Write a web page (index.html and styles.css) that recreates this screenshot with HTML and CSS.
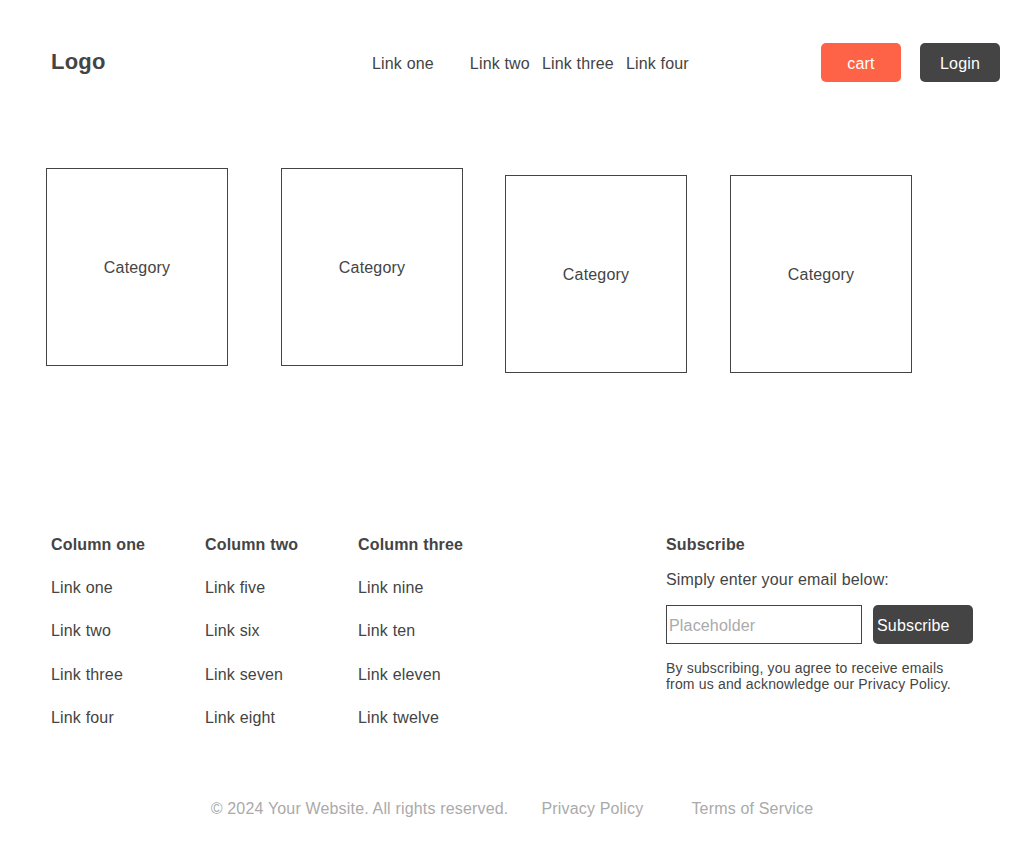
FILE: index.html
```html
<!DOCTYPE html>
<html lang="en">
<head>
<meta charset="utf-8">
<title>Shop</title>
<link rel="stylesheet" href="styles.css">
</head>
<body>
<header class="header">
  <div class="logo">Logo</div>
  <nav class="nav">
    <a class="nav-link nav-link-first" href="#">Link one</a>
    <a class="nav-link" href="#">Link two</a>
    <a class="nav-link" href="#">Link three</a>
    <a class="nav-link" href="#">Link four</a>
  </nav>
  <div class="actions">
    <button class="btn btn-cart">cart</button>
    <button class="btn btn-login">Login</button>
  </div>
</header>

<section class="categories">
  <div class="category cat-1">Category</div>
  <div class="category cat-2">Category</div>
  <div class="category cat-3">Category</div>
  <div class="category cat-4">Category</div>
</section>

<footer class="footer">
  <div class="footer-grid">
    <div class="col">
      <h4 class="col-title">Column one</h4>
      <ul class="col-links">
        <li><a href="#">Link one</a></li>
        <li><a href="#">Link two</a></li>
        <li><a href="#">Link three</a></li>
        <li><a href="#">Link four</a></li>
      </ul>
    </div>
    <div class="col">
      <h4 class="col-title">Column two</h4>
      <ul class="col-links">
        <li><a href="#">Link five</a></li>
        <li><a href="#">Link six</a></li>
        <li><a href="#">Link seven</a></li>
        <li><a href="#">Link eight</a></li>
      </ul>
    </div>
    <div class="col">
      <h4 class="col-title">Column three</h4>
      <ul class="col-links">
        <li><a href="#">Link nine</a></li>
        <li><a href="#">Link ten</a></li>
        <li><a href="#">Link eleven</a></li>
        <li><a href="#">Link twelve</a></li>
      </ul>
    </div>
    <div class="col subscribe">
      <h4 class="col-title">Subscribe</h4>
      <p class="sub-text">Simply enter your email below:</p>
      <form class="sub-form">
        <input class="sub-input" type="email" placeholder="Placeholder">
        <button class="sub-btn" type="button">Subscribe</button>
      </form>
      <p class="sub-note">By subscribing, you agree to receive emails from us and acknowledge our Privacy Policy.</p>
    </div>
  </div>
  <div class="bottom">
    <span class="copy">© 2024 Your Website. All rights reserved.</span>
    <a class="bottom-link bottom-link-1" href="#">Privacy Policy</a>
    <a class="bottom-link bottom-link-2" href="#">Terms of Service</a>
  </div>
</footer>
</body>
</html>
```
FILE: styles.css
```css
* { box-sizing: border-box; }

body {
  margin: 0;
  background: #fff;
  color: #444;
  font-family: "Liberation Sans", Arial, sans-serif;
  font-size: 16px;
  line-height: 18px;
  letter-spacing: 0.17px;
}

a { color: inherit; text-decoration: none; }

.header {
  display: flex;
  align-items: center;
  padding: 43px 24px 0 51px;
  height: 82px;
}

.logo {
  font-size: 22px;
  font-weight: bold;
  line-height: 24px;
  width: 54px;
  margin-top: -1px;
  letter-spacing: 0.2px;
}

.nav {
  display: flex;
  gap: 12px;
  margin-left: 267px;
  padding-top: 2px;
}

.nav-link-first { margin-right: 24px; }

.actions {
  margin-left: auto;
  display: flex;
  gap: 19px;
}

.btn {
  width: 80px;
  height: 39px;
  border: none;
  border-radius: 5px;
  color: #fff;
  font-family: inherit;
  font-size: 16px;
  letter-spacing: 0.17px;
  padding: 0;
  padding-top: 2px;
}

.btn-cart { background: #ff6347; }
.btn-login { background: #444; }

.categories {
  display: flex;
  align-items: flex-start;
  margin-top: 86px;
}

.category {
  width: 182px;
  height: 198px;
  border: 1px solid #444;
  display: flex;
  align-items: center;
  justify-content: center;
  padding-top: 2px;
}

.cat-1 { margin-left: 46px; }
.cat-2 { margin-left: 53px; }
.cat-3 { margin-left: 42px; margin-top: 7px; }
.cat-4 { margin-left: 43px; margin-top: 7px; }

.footer { margin-top: 163px; }

.footer-grid {
  display: grid;
  grid-template-columns: 154px 153px 308px 1fr;
  padding-left: 51px;
}

.col-title {
  margin: 0;
  font-size: 16px;
  font-weight: bold;
  line-height: 18px;
}

.col-links {
  list-style: none;
  margin: 25px 0 0;
  padding: 0;
  display: flex;
  flex-direction: column;
  gap: 25.4px;
}

.sub-text {
  margin: 17px 0 0;
}

.sub-form {
  display: flex;
  margin-top: 16px;
}

.sub-input {
  width: 196px;
  height: 39px;
  border: 1px solid #444;
  padding: 3px 0 0 2px;
  font-family: inherit;
  font-size: 16px;
  letter-spacing: 0.17px;
  color: #444;
  outline: none;
}

.sub-input::placeholder { color: #aaa; }

.sub-btn {
  margin-left: 11px;
  width: 100px;
  height: 39px;
  border: none;
  border-radius: 5px;
  background: #444;
  color: #fff;
  font-family: inherit;
  font-size: 16px;
  letter-spacing: 0.17px;
  text-align: left;
  padding: 2px 0 0 4px;
}

.sub-note {
  margin: 16px 0 0;
  font-size: 14px;
  line-height: 16px;
  max-width: 300px;
}

.bottom {
  display: flex;
  justify-content: center;
  margin-top: 73px;
  color: #aaa;
}

.bottom-link-1 { margin-left: 33px; }
.bottom-link-2 { margin-left: 48px; }
```
